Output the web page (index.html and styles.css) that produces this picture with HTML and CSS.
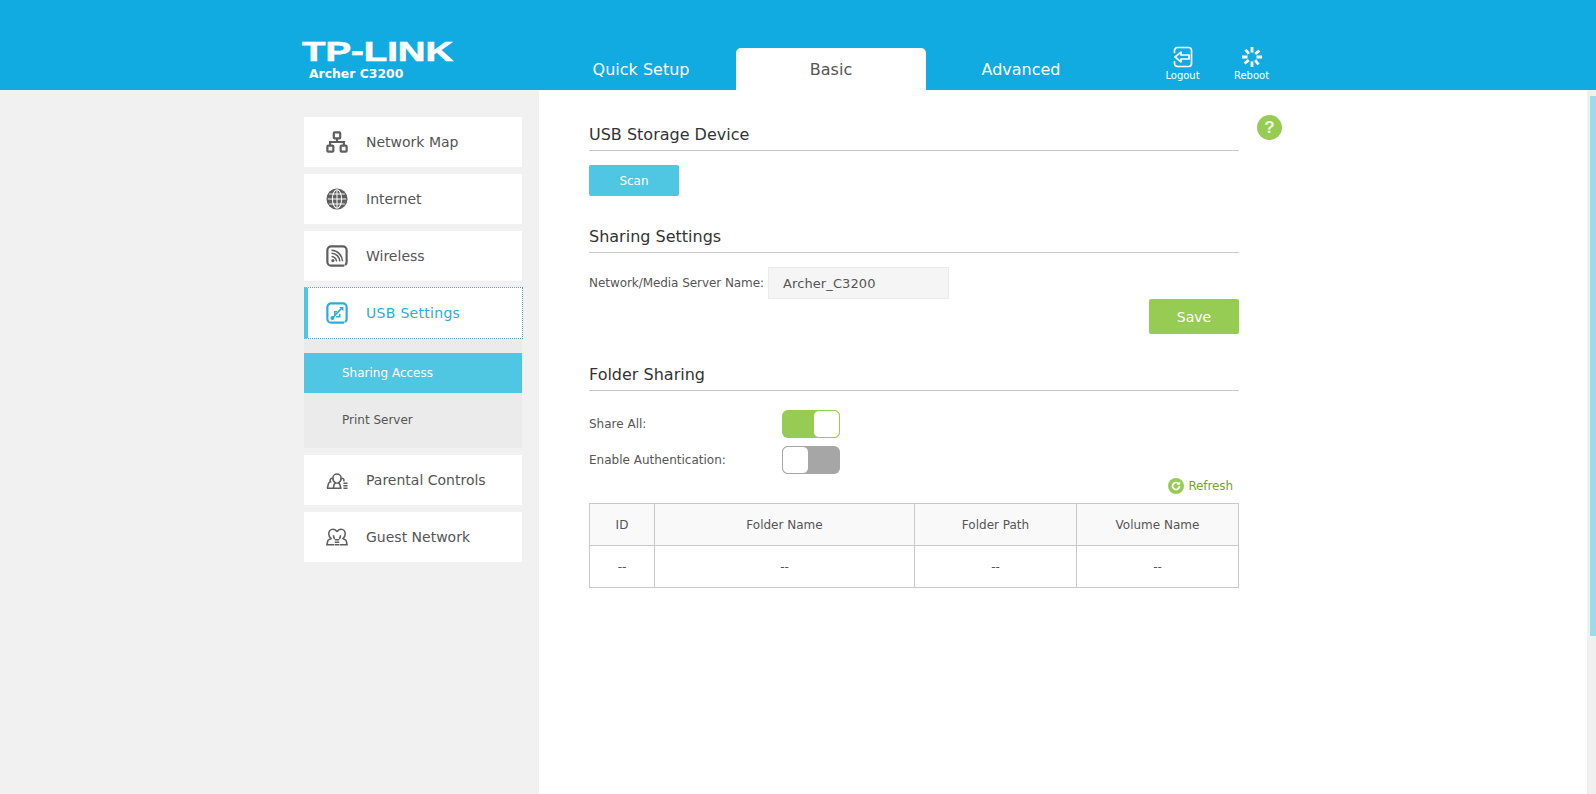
FILE: index.html
```html
<!DOCTYPE html>
<html lang="en">
<head>
    <meta charset="UTF-8">
    <title>Archer C3200 - USB Settings</title>
    <link rel="stylesheet" href="styles.css">
</head>
<body>
    <div class="header">
        <div class="logo">
            <div class="logo-mark"><span>TP-LINK</span></div>
            <div class="logo-model">Archer C3200</div>
        </div>
        <div class="tabs">
            <a class="tab">Quick Setup</a>
            <a class="tab active">Basic</a>
            <a class="tab">Advanced</a>
        </div>
        <div class="header-actions">
            <a class="header-action">
                <svg width="22" height="22" viewBox="0 0 22 22" fill="none" stroke="#fff" stroke-width="1.700" stroke-linejoin="round" stroke-linecap="round">
                    <path d="M2.500 6.500V4.500a3 3 0 0 1 3-3h11a3 3 0 0 1 3 3v13a3 3 0 0 1-3 3h-11a3 3 0 0 1-3-3v-2"/>
                    <path d="M3 11l6-4.800v2.800h8v4H9v2.800z"/>
                </svg>
                <span>Logout</span>
            </a>
            <a class="header-action">
                <svg width="22" height="22" viewBox="0 0 22 22" fill="none" stroke="#fff" stroke-width="2.800">
                    <path d="M11 1v5.500M11 15.500V21M1 11h5.500M15.500 11H21M4.500 3.500l3.300 4.300M14.200 14.200l3.300 4.300M18.500 4.500l-4.300 3.300M7.800 14.200l-4.300 3.300"/>
                </svg>
                <span>Reboot</span>
            </a>
        </div>
    </div>
    <div class="page">
        <div class="left-sidebar">
            <ul class="menu">
                <li class="menu-item">
                    <svg class="menu-icon" viewBox="0 0 24 24" fill="none" stroke="#5f5f5f" stroke-width="2.400">
                        <rect x="8.500" y="1.500" width="7" height="6.500" rx="1"/>
                        <rect x="1.500" y="16" width="6.500" height="6.500" rx="1"/>
                        <rect x="16" y="16" width="6.500" height="6.500" rx="1"/>
                        <path d="M12 8v4M4.500 16v-4h15v4"/>
                    </svg>
                    Network Map
                </li>
                <li class="menu-item">
                    <svg class="menu-icon" viewBox="0 0 24 24" fill="#5f5f5f" stroke="#fff" stroke-width="1.100">
                        <circle cx="12" cy="12" r="11.500" stroke="none"/>
                        <ellipse cx="12" cy="12" rx="5" ry="10" fill="none"/>
                        <path d="M12 2v20M2 12h20M3.500 6.500h17M3.500 17.500h17" fill="none"/>
                    </svg>
                    Internet
                </li>
                <li class="menu-item">
                    <svg class="menu-icon" viewBox="0 0 24 24" fill="none" stroke="#5f5f5f" stroke-width="2.400" stroke-linecap="round">
                        <path d="M19 22.500H5.500a4 4 0 0 1-4-4v-13a4 4 0 0 1 4-4h13a4 4 0 0 1 4 4v13a4 4 0 0 1-1 2.700"/>
                        <circle cx="7.500" cy="17" r="1.700" fill="#5f5f5f" stroke="none"/>
                        <path d="M6 12.500a5.500 5.500 0 0 1 5.500 5.500M6 9a9 9 0 0 1 9 9M6 5.800a12.200 12.200 0 0 1 12 12" stroke-width="1.700" stroke-linecap="butt"/>
                    </svg>
                    Wireless
                </li>
                <li class="menu-item selected">
                    <svg class="menu-icon" viewBox="0 0 24 24" fill="none" stroke="#2badd6" stroke-width="2.400" stroke-linecap="round">
                        <path d="M19 22.500H5.500a4 4 0 0 1-4-4v-13a4 4 0 0 1 4-4h13a4 4 0 0 1 4 4v13a4 4 0 0 1-1 2.700"/>
                        <circle cx="7" cy="17.500" r="2.200" fill="#2badd6" stroke="none"/>
                        <path d="M7 17.500 16.500 7.500M9.500 14.500V10.500h2.500M11 16h4v-3" stroke-width="1.600" stroke-linecap="butt"/>
                        <path d="M14.500 5.500h4.500V10z" fill="#2badd6" stroke="none"/>
                    </svg>
                    <span class="selected-text">USB Settings</span>
                </li>
                <li class="submenu">
                    <a class="submenu-item active">Sharing Access</a>
                    <a class="submenu-item">Print Server</a>
                </li>
                <li class="menu-item">
                    <svg class="menu-icon" viewBox="0 0 24 24" fill="none" stroke="#5f5f5f" stroke-width="1.700">
                        <path d="M1 21h16"/>
                        <path d="M1.500 21l1.200-5a3 3 0 0 1 2.300-2c-1-1.500-.5-4 1.500-4 .6 0 1.200.2 1.700.6"/>
                        <path d="M8 21l.8-4c.3-1 1-1.500 2-1.800-2-1-3.300-2.800-3.300-5.200a4.500 4.500 0 0 1 9 0c0 2.400-1.300 4.200-3.300 5.200 1 .3 1.700.8 2 1.800l.8 4"/>
                        <path d="M16 10.500c.5-.3 1-.5 1.500-.5 1.800 0 2.600 2 1.800 3.500"/>
                        <path d="M19 15.500h4.500M19 18.300h4.500M19 21h4.500"/>
                    </svg>
                    Parental Controls
                </li>
                <li class="menu-item">
                    <svg class="menu-icon" viewBox="0 0 24 24" fill="none" stroke="#5f5f5f" stroke-width="1.700">
                        <path d="M9 20.500H1l1-4.500c.3-1 2.500-1.500 3.500-2.200C4 12.500 3 10.800 3 8.500 3 5.500 5 3.500 7.500 3.500c2 0 3.500 1 4.500 3"/>
                        <path d="M15 20.500h8l-1-4.500c-.3-1-2.500-1.500-3.500-2.200 1.500-1.300 2.500-3 2.500-5.300 0-3-2-5-4.500-5-2 0-3.500 1-4.500 3"/>
                        <path d="M9.500 14c-1-1-1.300-2.500-1.300-4M14.500 14c1-1 1.300-2.500 1.300-4"/>
                        <path d="M9.500 15h5M9.500 17.800h5M9.500 20.500h5"/>
                    </svg>
                    Guest Network
                </li>
            </ul>
        </div>
        <div class="content">
            <div class="panel">
                <h2 class="section-title">USB Storage Device</h2>
                <button class="btn btn-scan">Scan</button>

                <h2 class="section-title sharing-title">Sharing Settings</h2>
                <div class="field-row">
                    <label class="field-label">Network/Media Server Name:</label>
                    <div class="text-field">Archer_C3200</div>
                </div>
                <div class="save-row">
                    <button class="btn btn-save">Save</button>
                </div>

                <h2 class="section-title folder-title">Folder Sharing</h2>
                <div class="toggle-row">
                    <span class="toggle-label">Share All:</span>
                    <span class="toggle on"><i class="knob"></i></span>
                </div>
                <div class="toggle-row">
                    <span class="toggle-label">Enable Authentication:</span>
                    <span class="toggle off"><i class="knob"></i></span>
                </div>
                <div class="refresh-row">
                    <svg width="16" height="16" viewBox="0 0 16 16">
                        <circle cx="8" cy="8" r="8" fill="#97cc54"/>
                        <path d="M11.500 8a3.500 3.500 0 1 1-1.100-2.550" fill="none" stroke="#fff" stroke-width="1.700"/>
                        <path d="M8.800 6.800h3.400V3.400z" fill="#fff"/>
                    </svg>
                    <a class="refresh-link">Refresh</a>
                </div>
                <table class="folder-table">
                    <thead>
                        <tr>
                            <th class="col-id">ID</th>
                            <th class="col-name">Folder Name</th>
                            <th class="col-path">Folder Path</th>
                            <th>Volume Name</th>
                        </tr>
                    </thead>
                    <tbody>
                        <tr>
                            <td>--</td>
                            <td>--</td>
                            <td>--</td>
                            <td>--</td>
                        </tr>
                    </tbody>
                </table>
            </div>
            <div class="help-badge">?</div>
        </div>
        <div class="scroll-track"><div class="scroll-thumb"></div></div>
    </div>
</body>
</html>
```

FILE: styles.css
```css
/* Reset default margin and padding */
* {
    margin: 0;
    padding: 0;
    box-sizing: border-box;
}

html, body {
    height: 100%;
    overflow: hidden;
}

body {
    font-family: 'DejaVu Sans', sans-serif;
    font-size: 12px;
    color: #555;
    background: #fff;
    display: flex;
    flex-direction: column;
}

/* Header */
.header {
    height: 90px;
    flex: none;
    background: #11abe2;
    color: #fff;
    display: flex;
    padding-left: 302px;
}

.logo {
    width: 434px;
    padding-top: 40px;
}

.logo-mark {
    height: 24px;
    font-family: 'Liberation Sans', sans-serif;
    font-weight: bold;
    font-size: 27px;
    line-height: 24px;
}

.logo-mark span {
    display: inline-block;
    transform: scaleX(1.42);
    transform-origin: left center;
    -webkit-text-stroke: 0.6px #fff;
}

.logo-model {
    margin: 2px 0 0 7px;
    font-weight: bold;
    font-size: 12.400px;
    line-height: 16px;
}

.tabs {
    display: flex;
    align-self: flex-end;
    margin-left: -190px;
}

.tab {
    width: 190px;
    height: 42px;
    line-height: 44px;
    text-align: center;
    font-size: 16px;
    border-radius: 5px 5px 0 0;
}

.tab.active {
    background: #fff;
    color: #555;
}

.header-actions {
    display: flex;
    margin-left: 32px;
    padding-top: 46px;
}

.header-action {
    width: 69px;
    display: flex;
    flex-direction: column;
    align-items: center;
    font-size: 10px;
}

.header-action span {
    margin-top: 2px;
}

/* Sidebar */
.page {
    flex: 1;
    display: flex;
    min-height: 0;
}

.left-sidebar {
    width: 539px;
    flex: none;
    background: #f1f1f1;
    padding: 27px 17px 0 304px;
}

.menu {
    list-style: none;
}

.menu-item {
    height: 50px;
    margin-bottom: 7px;
    background: #fff;
    display: flex;
    align-items: center;
    padding-left: 22px;
    font-size: 14px;
    color: #555;
}

.menu-icon {
    width: 22px;
    height: 22px;
    margin-right: 18px;
}

/* top margin collapses with the 7px below the previous item */
.menu-item.selected {
    height: 52px;
    margin: -1px -1px 0 0;
    color: #2badd6;
    border: 1px dotted #4fa8c4;
    border-left: 4px solid #4fc6e2;
    padding-left: 18px;
}

.selected-text {
    letter-spacing: 0.3px;
}

.submenu {
    margin-bottom: 7px;
    padding: 14px 0 14px;
    background: #ebebeb;
    height: 109px;
}

.submenu-item {
    display: block;
    height: 40px;
    line-height: 40px;
    padding-left: 38px;
    font-size: 12px;
    margin-bottom: 7px;
}

.submenu-item.active {
    background: #4fc6e2;
    color: #fff;
}

/* Main content area */
.content {
    flex: 1;
    display: flex;
    align-items: flex-start;
    padding: 33px 0 0 50px;
}

.panel {
    width: 650px;
}

.help-badge {
    width: 25px;
    height: 25px;
    margin: -8px 0 0 18px;
    border-radius: 50%;
    background: #97cc54;
    color: #eef7e0;
    font-family: 'Liberation Sans', sans-serif;
    font-size: 17px;
    font-weight: bold;
    line-height: 26px;
    text-align: center;
}

.section-title {
    height: 28px;
    font-size: 16px;
    font-weight: normal;
    line-height: 23px;
    color: #333;
    border-bottom: 1px solid #c9c9c9;
}

.sharing-title {
    margin-top: 29px;
}

.folder-title {
    margin-top: 29px;
}

.btn {
    display: block;
    border: none;
    color: #fff;
    border-radius: 2px;
    font-family: inherit;
}

.btn-scan {
    width: 90px;
    height: 31px;
    margin-top: 14px;
    background: #4fc6e2;
    font-size: 12px;
}

.field-row {
    display: flex;
    align-items: center;
    margin-top: 14px;
}

.field-label {
    width: 179px;
    font-size: 12px;
    letter-spacing: -0.06px;
}

.text-field {
    width: 181px;
    height: 32px;
    line-height: 32px;
    padding-left: 14px;
    background: #f5f5f5;
    border: 1px solid #ebebeb;
    font-size: 13px;
    letter-spacing: 0.1px;
}

.save-row {
    display: flex;
    justify-content: flex-end;
}

.btn-save {
    width: 90px;
    height: 35px;
    background: #97cc54;
    font-size: 14px;
}

.toggle-row {
    display: flex;
    align-items: center;
    height: 28px;
    margin-top: 8px;
}

.folder-title + .toggle-row {
    margin-top: 19px;
}

.toggle-label {
    width: 193px;
    font-size: 12px;
}

.toggle {
    width: 58px;
    height: 28px;
    border-radius: 6px;
    display: flex;
}

.toggle.on {
    background: #97cc54;
    justify-content: flex-end;
}

.toggle.off {
    background: #a6a6a6;
}

.knob {
    width: 27px;
    height: 28px;
    background: #fff;
    border-radius: 6px;
}

.toggle.on .knob {
    border: 1px solid #97cc54;
}

.toggle.off .knob {
    border: 1px solid #a6a6a6;
}

/* Refresh link above the table */
.refresh-row {
    display: flex;
    justify-content: flex-end;
    align-items: center;
    gap: 4px;
    height: 16px;
    margin-top: 4px;
    padding-right: 6px;
}

.refresh-link {
    color: #76a033;
    font-size: 12px;
    letter-spacing: -0.1px;
}

/* Folder table */
.folder-table {
    width: 650px;
    margin-top: 9px;
    border-collapse: collapse;
    table-layout: fixed;
    font-size: 12px;
}

th, td {
    height: 42px;
    border: 1px solid #c9c9c9;
    text-align: center;
    font-weight: normal;
}

th {
    background: #f9f9f9;
}

.col-id {
    width: 65px;
}

.col-name {
    width: 260px;
}

.col-path {
    width: 162px;
}

/* Page scrollbar */
.scroll-track {
    width: 9px;
    flex: none;
    background: #f0f0f0;
    padding: 6px 0 0 3px;
}

.scroll-thumb {
    height: 540px;
    background: #9cdcea;
}
```
